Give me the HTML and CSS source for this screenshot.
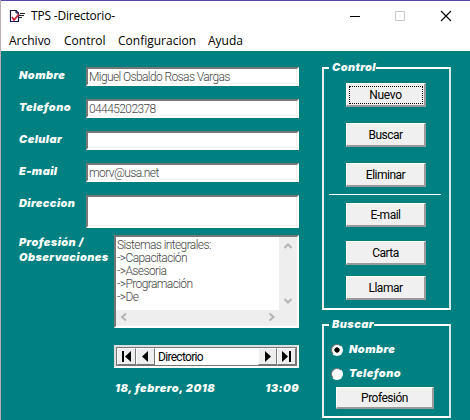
FILE: index.html
```html
<!DOCTYPE html>
<html lang="es">
<head>
<meta charset="utf-8">
<title>TPS -Directorio-</title>
<link rel="stylesheet" href="styles.css">
</head>
<body>
<div class="window">
  <header class="titlebar">
    <svg class="app-icon" width="17" height="14" viewBox="0 0 17 14"><path d="M1.500 1.500H7l2.500 2.500v8.500h-8z" fill="#fff" stroke="#17174d" stroke-width="1.200"/><path d="M7 1v3h3" fill="none" stroke="#17174d"/><path d="M3 8l2 3 5-6" fill="none" stroke="#c32542" stroke-width="1.800"/><path d="M11 4.500h5M10 6.500h5M10 8.500h3" stroke="#222" stroke-width="1"/></svg>
    <h1>TPS -Directorio-</h1>
    <svg class="controls" width="104" height="12" viewBox="0 0 104 12"><path d="M0 6.500h10" stroke="#000"/><path d="M45.500 1.500h9v9h-9z" fill="none" stroke="#cbc7cf"/><path d="M91 1l10 10M101 1L91 11" stroke="#000" stroke-width="1.100"/></svg>
  </header>
  <nav class="menu"><span class="m1">Archivo</span><span class="m2">Control</span><span class="m3">Configuracion</span><span class="m4">Ayuda</span></nav>
  <main class="body">
    <section class="form">
      <div class="row"><label>Nombre</label><div class="field">Miguel Osbaldo Rosas Vargas</div></div>
      <div class="row"><label>Telefono</label><div class="field">04445202378</div></div>
      <div class="row"><label>Celular</label><div class="field"></div></div>
      <div class="row"><label>E-mail</label><div class="field">morv@usa.net</div></div>
      <div class="row tall"><label>Direccion</label><div class="field"></div></div>
      <div class="row notes-row">
        <label class="l6">Profesión /<br>Observaciones</label>
        <div class="notes">
          <div class="notes-text">Sistemas integrales:<br>-&gt;Capacitación<br>-&gt;Asesoria<br>-&gt;Programación<br>-&gt;De</div>
          <svg class="vbar" width="18" height="73" viewBox="0 0 18 73"><path d="M5.500 11L9 7.500l3.500 3.500M5.500 62L9 65.500l3.500-3.500" fill="none" stroke="#b4b4b4" stroke-width="2"/></svg>
          <svg class="hbar" width="181" height="16" viewBox="0 0 181 16"><path d="M10 3.500L6 7l4 3.500M153.500 3.500L157.500 7l-4 3.500" fill="none" stroke="#b4b4b4" stroke-width="2"/></svg>
        </div>
      </div>
      <div class="navigator">
        <b><svg width="18" height="17" viewBox="0 0 18 17"><path d="M4 3h2v11H4zM13 3v11L7 8.500z"/></svg></b>
        <b><svg width="18" height="17" viewBox="0 0 18 17"><path d="M11 3v11L5 8.500z"/></svg></b>
        <span class="nav-text">Directorio</span>
        <b><svg width="18" height="17" viewBox="0 0 18 17"><path d="M6 3v11l6-5.500z"/></svg></b>
        <b><svg width="18" height="17" viewBox="0 0 18 17"><path d="M4 3v11l6-5.500zM11 3h2v11h-2z"/></svg></b>
      </div>
      <div class="status"><span class="date">18, febrero, 2018</span><span class="time">13:09</span></div>
    </section>
    <aside class="side">
      <fieldset class="control">
        <legend>Control</legend>
        <div class="btn focused">Nuevo</div>
        <div class="btn">Buscar</div>
        <div class="btn b3">Eliminar</div>
        <hr>
        <div class="btn b4">E-mail</div>
        <div class="btn b5">Carta</div>
        <div class="btn">Llamar</div>
      </fieldset>
      <fieldset class="search">
        <legend>Buscar</legend>
        <div class="radio"><i class="on"></i><span>Nombre</span></div>
        <div class="radio"><i></i><span>Telefono</span></div>
        <div class="btn b7">Profesión</div>
      </fieldset>
    </aside>
  </main>
</div>
</body>
</html>
```
FILE: styles.css
```css
* { box-sizing: border-box; }
body { margin: 0; background: #008080; font: 12px/13px Roboto, sans-serif; letter-spacing: -0.5px; }
.window { width: 470px; height: 420px; overflow: hidden; border-left: 1px solid #b9adb6; white-space: nowrap; }
.titlebar { height: 30px; background: #fff; border-top: 1px solid #5b47a8; display: flex; align-items: center; padding-left: 8px; }
.app-icon { flex: none; }
h1 { margin: 0 0 0 5px; width: 321px; font: 12px/16px "Open Sans", sans-serif; letter-spacing: -0.2px; color: #000; }
.controls { flex: none; margin-left: -2px; }
.menu { height: 21px; background: #fff; display: flex; padding-left: 8px; font: 12px/22px "Open Sans", sans-serif; letter-spacing: 0; }
.m1 { width: 55px; }
.m2 { width: 54px; }
.m3 { width: 90px; }
.body { height: 369px; background: #008080; display: flex; }
.form { width: 298px; padding: 16px 0 0 18px; }
.row { display: flex; height: 19px; margin-bottom: 13px; }
.row label { flex: none; width: 67px; padding-top: 2px; }
label, legend, .status, .radio { font: italic 900 11px/13px Inter, sans-serif; letter-spacing: 0.4px; color: #fff; }
.row .field, .row .notes { flex: 1; background: #fff; border: 2px solid; border-color: #777 #fff #fff #777; box-shadow: inset -1px -1px #f1f1f1; font-weight: 300; letter-spacing: -0.6px; color: #444; }
.field { padding: 2px 0 0 1px; }
.row.tall { height: 33px; margin-bottom: 7px; }
.notes-row { height: 93px; margin-bottom: 17px; }
.row .l6 { width: 95px; padding-top: 0; line-height: 15px; }
.row .notes { display: grid; grid-template: 73px 16px / 163px 18px; background: #eee; }
.notes-text { background: #fff; padding: 2px 0 0 1px; line-height: 13px; }
.vbar, .hbar { display: block; }
.hbar { grid-column: 1 / 3; }
.navigator { margin-left: 95px; height: 23px; display: flex; border: 2px solid #fff; border-top-color: #ddd; border-left-color: #ddd; outline: 1px solid #777; outline-offset: -3px; background: #fff; padding: 1px; }
.navigator b { width: 19px; height: 17px; background: #eee; border: 1px solid #fff; border-right-color: #777; border-bottom-color: #777; }
.navigator svg { display: block; margin-top: -1px; }
.nav-text { flex: 1; padding: 3px 0 0 3px; letter-spacing: -0.7px; }
.status { display: flex; justify-content: space-between; margin: 14px 0 0 96px; }
.date { letter-spacing: 0.5px; }
.side { margin-left: 23px; width: 129px; padding-top: 10px; }
fieldset { margin: 0; padding: 0; border: 2px solid #fff; border-left-color: #e4eeee; border-right-color: #d8e8e8; min-width: 0; }
legend { margin-left: 5px; padding: 0 0 0 3px; height: 13px; }
.control { height: 249px; }
.search { height: 100px; margin-top: 8px; }
.btn { width: 80px; height: 24px; margin: 0 auto 16px 22px; background: #f0f0f0; border: 1px solid #fff; border-right: 2px solid #999; border-bottom: 2px solid #999; text-align: center; line-height: 22px; color: #000; }
.focused { outline: 1px dotted #000; outline-offset: -4px; margin-top: 9px; letter-spacing: -0.3px; }
.b3 { margin-bottom: 7px; }
hr { width: 112px; height: 1px; margin: 0 0 8px 5px; border: 0; background: #fff; }
.b4 { margin-bottom: 14px; }
.b5 { margin-bottom: 11px; }
.radio { display: flex; align-items: center; height: 13px; margin: 12px 0 11px 7px; }
.radio + .radio { margin-top: 0; margin-bottom: 7px; }
.radio i { width: 12px; height: 12px; border-radius: 50%; background: #fff; border: 1px solid; border-color: #777 #fff #fff #777; margin-right: 6px; }
.radio .on { background: radial-gradient(circle, #000 2.3px, #fff 3px); }
.b7 { width: 98px; height: 22px; margin: 0 0 0 12px; line-height: 20px; }
```
